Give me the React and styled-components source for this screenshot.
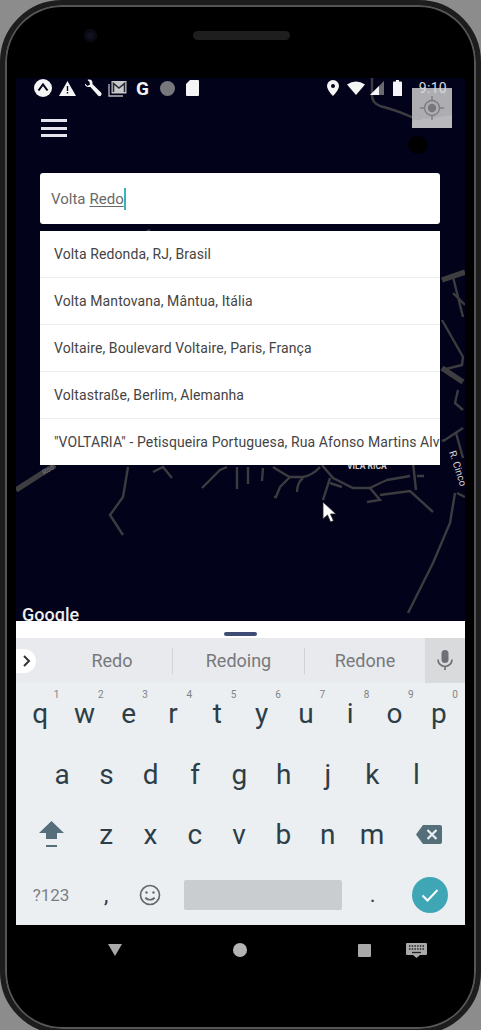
import React from 'react';
import styled, { createGlobalStyle } from 'styled-components';

const GlobalStyle = createGlobalStyle`
  html, body {
    margin: 0;
    padding: 0;
    width: 481px;
    height: 1030px;
    overflow: hidden;
    background: #8c8c8c;
    font-family: Roboto, "Noto Sans", sans-serif;
  }
`;

const Phone = styled.div`
  box-sizing: border-box;
  width: 481px;
  height: 1034px;
  border: 5px solid #1d1d1d;
  border-radius: 62px;
  background: #000;
  box-shadow: inset 0 0 0 2px #555;
  display: flex;
  flex-direction: column;
`;

const TopBezel = styled.div`
  height: 73px;
  flex: none;
  display: flex;
  align-items: flex-start;
  padding-top: 24px;
  box-sizing: border-box;
`;

const Camera = styled.div`
  width: 13px;
  height: 13px;
  margin-left: 79px;
  border-radius: 50%;
  background: #10121f;
  box-shadow: inset 0 0 0 3px #0a0a12;
`;

const Speaker = styled.div`
  width: 97px;
  height: 9px;
  margin-left: 96px;
  margin-top: 2px;
  border-radius: 5px;
  background: #1e1e1e;
`;

const Screen = styled.div`
  position: relative;
  flex: none;
  height: 847px;
  margin: 0 11px;
  background: #02021a;
  display: flex;
  flex-direction: column;
  overflow: hidden;
`;

const MapDrawing = styled.svg`
  position: absolute;
  left: 0;
  top: 0;
`;

const StatusBar = styled.div`
  position: relative;
  z-index: 2;
  height: 20px;
  flex: none;
  display: flex;
  align-items: center;
  justify-content: space-between;
  padding: 0 18px 0 14px;
`;

const StatusGroup = styled.div`
  display: flex;
  align-items: center;
`;

const StatusSlot = styled.div`
  width: ${props => props.$width || 25}px;
  height: 20px;
  display: flex;
  align-items: center;
  justify-content: center;
  color: #f2f2f2;
`;

const GoogleG = styled.span`
  font-size: 19px;
  font-weight: 700;
  line-height: 1;
`;

const Clock = styled.span`
  margin-left: 7px;
  font-size: 14px;
  letter-spacing: 0.3px;
  color: #d9d9dc;
`;

const LocateButton = styled.div`
  position: absolute;
  z-index: 1;
  top: 10px;
  right: 13px;
  width: 40px;
  height: 40px;
  background: linear-gradient(172deg, #aeaeb2 72%, #b9b9bd 72%);
  display: flex;
  align-items: center;
  justify-content: center;
`;

const MenuButton = styled.div`
  position: relative;
  flex: none;
  width: 26px;
  height: 18px;
  margin: 21px 0 0 25px;
  display: flex;
  flex-direction: column;
  justify-content: space-between;
`;

const MenuBar = styled.span`
  display: block;
  height: 3px;
  background: #e4e4ea;
`;

const SearchBox = styled.div`
  position: relative;
  flex: none;
  height: 51px;
  margin: 36px 25px 0 24px;
  padding-left: 11px;
  background: #fff;
  border-radius: 3px;
  display: flex;
  align-items: center;
  font-size: 15px;
  color: #696969;
`;

const Composing = styled.span`
  margin-left: 4px;
  text-decoration: underline;
  text-underline-offset: 2px;
  border-right: 2px solid #35b5bd;
  padding: 2px 0;
`;

const Suggestions = styled.ul`
  position: relative;
  flex: none;
  list-style: none;
  margin: 7px 25px 0 24px;
  padding: 0;
  background: #fff;
  height: 234px;
  overflow: hidden;
`;

const Suggestion = styled.li`
  box-sizing: border-box;
  height: 47px;
  padding-left: 14px;
  display: flex;
  align-items: center;
  white-space: nowrap;
  font-size: 14px;
  letter-spacing: 0.1px;
  color: #444;
  border-bottom: 1px solid ${props => (props.$last ? 'transparent' : '#eeeeee')};
`;

const Pointer = styled.svg`
  position: absolute;
  left: 306px;
  top: 423px;
`;

const Keyboard = styled.div`
  position: relative;
  margin-top: auto;
  flex: none;
  background: #eceff1;
  display: flex;
  flex-direction: column;
`;

const HandleStrip = styled.div`
  height: 17px;
  background: #fff;
  display: flex;
  justify-content: center;
  padding-top: 11px;
  box-sizing: border-box;
`;

const Handle = styled.div`
  width: 33px;
  height: 4px;
  border-radius: 2px;
  background: #3d4b75;
`;

const CandidateStrip = styled.div`
  height: 45px;
  background: #e8eaed;
  display: flex;
  align-items: center;
`;

const ExpandTab = styled.div`
  width: 20px;
  height: 24px;
  margin-right: 16px;
  border-radius: 0 12px 12px 0;
  background: #fff;
  display: flex;
  align-items: center;
  justify-content: center;
`;

const Candidate = styled.div`
  box-sizing: border-box;
  width: ${props => props.$width}px;
  height: 26px;
  line-height: 26px;
  text-align: center;
  font-size: 18px;
  color: #77797c;
  border-right: ${props => (props.$divider ? '1px solid #d0d2d5' : 'none')};
`;

const MicCell = styled.div`
  width: 40px;
  height: 45px;
  background: #d8dadc;
  display: flex;
  align-items: center;
  justify-content: center;
`;

const KeyRow = styled.div`
  height: 60.4px;
  display: flex;
  align-items: center;
  padding-left: ${props => props.$inset || 2}px;
`;

const Key = styled.div`
  position: relative;
  flex: none;
  width: ${props => props.$width || 44.3}px;
  height: 100%;
  display: flex;
  align-items: center;
  justify-content: center;
  font-size: ${props => props.$size || 28}px;
  color: ${props => props.$color || '#2c3e48'};
`;

const KeyHint = styled.span`
  position: absolute;
  top: 6px;
  right: 3px;
  font-size: 10px;
  color: #7d8488;
`;

const SpaceBar = styled.div`
  width: 158px;
  height: 30px;
  margin: 0 9px 0 11px;
  flex: none;
  border-radius: 2px;
  background: #cacdd0;
`;

const DoneButton = styled.div`
  width: 36px;
  height: 36px;
  border-radius: 50%;
  background: #3fa6b6;
  display: flex;
  align-items: center;
  justify-content: center;
`;

const NavBar = styled.div`
  flex: none;
  height: 50px;
  margin: 0 11px;
  padding-left: 92px;
  display: flex;
  align-items: center;
`;

const NavBack = styled.div`
  width: 0;
  height: 0;
  border-left: 7px solid transparent;
  border-right: 7px solid transparent;
  border-top: 12px solid #a9a9a9;
`;

const NavHome = styled.div`
  width: 14px;
  height: 14px;
  margin-left: 111px;
  border-radius: 50%;
  background: #b4b4b4;
`;

const NavRecents = styled.div`
  width: 13px;
  height: 13px;
  margin-left: 111px;
  border-radius: 1px;
  background: #a9a9a9;
`;

const NavKeyboard = styled.svg`
  margin-left: 35px;
`;

const rowOne = [
  ['q', 1], ['w', 2], ['e', 3], ['r', 4], ['t', 5],
  ['y', 6], ['u', 7], ['i', 8], ['o', 9], ['p', 0]
];
const rowTwo = ['a', 's', 'd', 'f', 'g', 'h', 'j', 'k', 'l'];
const rowThree = ['z', 'x', 'c', 'v', 'b', 'n', 'm'];

const places = [
  'Volta Redonda, RJ, Brasil',
  'Volta Mantovana, Mântua, Itália',
  'Voltaire, Boulevard Voltaire, Paris, França',
  'Voltastraße, Berlim, Alemanha',
  '"VOLTARIA" - Petisqueira Portuguesa, Rua Afonso Martins Alves'
];

// road centre lines, in page coordinates
const thinRoads = [
  'M372 77v18q0 8 8 11q16 4 34 12',
  'M128 467l-5 30l-13 18l13 20',
  'M153 472l10-5l9 11',
  'M202 488l18-18l7-3',
  'M237 467v22M248 467v17M263 468l-1 13',
  'M273 467q14 9 17 10h13q10-2 17-10',
  'M290 477l-10 10l-4 10h-2M303 478q-6 5-6 14',
  'M322 465l11 13l20 10h17q10-5 17-8l23-4',
  'M330 478l-7 22M330 483l12 4',
  'M370 488l10 12l-13 2M380 495l30-4l23 21M413 463l3 27M417 476h7',
  'M455 493l-5 30l-17 40l-25 50M457 493l8 4',
  'M453 277l10 40M453 293l12 12M442 320l21 37l-1 8l-20 5',
  'M458 390l-3 13l8 7M463 428l-18 12l-3 1M456 433l7 25',
  'M130 240l20-10'
];
const thickRoads = ['M16 490l39-25', 'M442 280l23-8', 'M442 368l21 14'];

const App = () => (
  <React.Fragment>
    <GlobalStyle />
    <Phone>
      <TopBezel>
        <Camera />
        <Speaker />
      </TopBezel>
      <Screen>
        <MapDrawing width="449" height="847" viewBox="16 78 449 847" fill="none">
          {thinRoads.map(d => (
            <path key={d} d={d} stroke="#3c3c40" strokeWidth="2.4" />
          ))}
          {thickRoads.map(d => (
            <path key={d} d={d} stroke="#3e3e40" strokeWidth="5.5" />
          ))}
          <ellipse cx="418" cy="145" rx="10" ry="9" fill="#000" />
          <text x="44" y="475" fontSize="7" fill="#77777a" transform="rotate(-30 44 475)" fontFamily="Roboto">
            Rod.
          </text>
          <text x="347" y="469" fontSize="8.5" fontWeight="700" fill="#c8c8cc" fontFamily="Roboto">
            VILA RICA
          </text>
          <text x="449" y="452" fontSize="10" fill="#d5d5d8" transform="rotate(72 449 452)" fontFamily="Roboto">
            R. Cinco
          </text>
          <text x="22" y="621" fontSize="18" fontWeight="500" fill="#eee" fontFamily="Roboto">
            Google
          </text>
        </MapDrawing>

        <LocateButton>
          <svg width="26" height="26" viewBox="0 0 26 26" fill="none" stroke="#7d7d82" strokeWidth="1.4">
            <circle cx="13" cy="13" r="7.5" />
            <circle cx="13" cy="13" r="4.2" fill="#77777c" stroke="none" />
            <path d="M13 1v4.5M13 20.5V25M1 13h4.5M20.5 13H25" />
          </svg>
        </LocateButton>

        <StatusBar>
          <StatusGroup>
            <StatusSlot>
              <svg width="18" height="18" viewBox="0 0 18 18">
                <circle cx="9" cy="9" r="9" fill="#f5f5f5" />
                <path d="M4.5 11.5L9 5.5l4.5 6" fill="none" stroke="#02021a" strokeWidth="2" />
              </svg>
            </StatusSlot>
            <StatusSlot>
              <svg width="17" height="15" viewBox="0 0 17 15">
                <path d="M8.5 0L17 15H0z" fill="#f5f5f5" />
                <path d="M7.8 5h1.4v5H7.8zM7.8 11h1.4v1.6H7.8z" fill="#02021a" />
              </svg>
            </StatusSlot>
            <StatusSlot>
              <svg width="18" height="18" viewBox="0 0 18 18">
                <path
                  d="M1 4.5L3.5 7 6 5.5 5.5 3 3.5 1C5.5 0 8 .8 8.4 3c.2.8.1 1.500 0 2L17 13.500c.8 1 .8 2 0 3s-2.300 1-3 0L6.200 7.800C3.500 8.500.5 7 1 4.500z"
                  fill="#f5f5f5"
                />
              </svg>
            </StatusSlot>
            <StatusSlot>
              <svg width="19" height="17" viewBox="0 0 19 17" fill="none">
                <path d="M1 4v12h14" stroke="#b9b9bd" strokeWidth="1.3" />
                <rect x="3.500" y="1" width="15" height="12.500" fill="#c9c9cc" />
                <path d="M5.500 12V3.500L11 8l5.500-4.500V12" stroke="#2a2a35" strokeWidth="1.600" />
              </svg>
            </StatusSlot>
            <StatusSlot>
              <GoogleG>G</GoogleG>
            </StatusSlot>
            <StatusSlot>
              <svg width="15" height="15" viewBox="0 0 15 15">
                <circle cx="7.500" cy="7.500" r="7.500" fill="#77777c" />
              </svg>
            </StatusSlot>
            <StatusSlot>
              <svg width="13" height="16" viewBox="0 0 13 16">
                <path d="M4 0h8a1 1 0 0 1 1 1v14a1 1 0 0 1-1 1H1a1 1 0 0 1-1-1V4z" fill="#f5f5f5" />
              </svg>
            </StatusSlot>
          </StatusGroup>
          <StatusGroup>
            <StatusSlot $width={18}>
              <svg width="12" height="16" viewBox="0 0 12 16">
                <path
                  fillRule="evenodd"
                  d="M6 0a6 6 0 0 1 6 6c0 4-6 10-6 10S0 10 0 6a6 6 0 0 1 6-6zm0 4a2 2 0 1 0 0 4 2 2 0 0 0 0-4z"
                  fill="#f5f5f5"
                />
              </svg>
            </StatusSlot>
            <StatusSlot $width={28}>
              <svg width="18" height="14" viewBox="0 0 18 14">
                <path d="M0 3.500Q9-2.500 18 3.500L9 14z" fill="#f5f5f5" />
              </svg>
            </StatusSlot>
            <StatusSlot $width={14}>
              <svg width="14" height="14" viewBox="0 0 14 14">
                <path d="M14 0v14H0z" fill="#6a6a6e" />
                <path d="M9 5v9H0z" fill="#f5f5f5" />
              </svg>
            </StatusSlot>
            <StatusSlot $width={28}>
              <svg width="9" height="16" viewBox="0 0 9 16">
                <path d="M3 0h3v1.500h2a1 1 0 0 1 1 1V16H0V2.500a1 1 0 0 1 1-1h2z" fill="#f5f5f5" />
              </svg>
            </StatusSlot>
            <Clock>9:10</Clock>
          </StatusGroup>
        </StatusBar>

        <MenuButton>
          <MenuBar />
          <MenuBar />
          <MenuBar />
        </MenuButton>

        <SearchBox>
          Volta<Composing>Redo</Composing>
        </SearchBox>

        <Suggestions>
          {places.map((place, i) => (
            <Suggestion key={place} $last={i === places.length - 1}>
              {place}
            </Suggestion>
          ))}
        </Suggestions>

        <Pointer width="16" height="24" viewBox="0 0 16 24">
          <path d="M1 1v17l4.500-4 3 7 3-1.300-3-6.700H14z" fill="#fff" stroke="#222" strokeWidth="0.800" />
        </Pointer>

        <Keyboard>
          <HandleStrip>
            <Handle />
          </HandleStrip>
          <CandidateStrip>
            <ExpandTab>
              <svg width="9" height="12" viewBox="0 0 9 12" fill="none" stroke="#333" strokeWidth="2">
                <path d="M2 1l5 5-5 5" />
              </svg>
            </ExpandTab>
            <Candidate $width={121} $divider>Redo</Candidate>
            <Candidate $width={132} $divider>Redoing</Candidate>
            <Candidate $width={120}>Redone</Candidate>
            <MicCell>
              <svg width="16" height="21" viewBox="0 0 16 21" fill="none">
                <rect x="4.500" y="0" width="7" height="13" rx="3.500" fill="#6d7175" />
                <path d="M1 9.500a7 7 0 0 0 14 0M8 16.500V20" stroke="#6d7175" strokeWidth="1.700" />
              </svg>
            </MicCell>
          </CandidateStrip>

          <KeyRow>
            {rowOne.map(([letter, hint]) => (
              <Key key={letter}>
                {letter}
                <KeyHint>{hint}</KeyHint>
              </Key>
            ))}
          </KeyRow>
          <KeyRow $inset={24}>
            {rowTwo.map(letter => (
              <Key key={letter}>{letter}</Key>
            ))}
          </KeyRow>
          <KeyRow>
            <Key $width={66}>
              <svg width="25" height="28" viewBox="0 0 25 28">
                <path d="M12.500 1L25 13h-7v6H7v-6H0z" fill="#546e7a" />
                <rect x="7" y="25" width="11" height="2" fill="#546e7a" />
              </svg>
            </Key>
            {rowThree.map(letter => (
              <Key key={letter}>{letter}</Key>
            ))}
            <Key $width={70}>
              <svg width="26" height="19" viewBox="0 0 26 19">
                <path d="M7 0h17a2 2 0 0 1 2 2v15a2 2 0 0 1-2 2H7L0 9.500z" fill="#546e7a" />
                <path d="M11.500 5l9 9M20.500 5l-9 9" stroke="#eceff1" strokeWidth="2.200" />
              </svg>
            </Key>
          </KeyRow>
          <KeyRow>
            <Key $width={66} $size={17} $color="#7b7f83">?123</Key>
            <Key $size={22}>,</Key>
            <Key>
              <svg width="22" height="22" viewBox="0 0 22 22" fill="none" stroke="#666a6e" strokeWidth="1.700">
                <circle cx="11" cy="11" r="9.500" />
                <circle cx="7.500" cy="8.500" r="1.200" fill="#666a6e" stroke="none" />
                <circle cx="14.500" cy="8.500" r="1.200" fill="#666a6e" stroke="none" />
                <path d="M6.500 13.500c1.500 3 7.500 3 9 0" />
              </svg>
            </Key>
            <SpaceBar />
            <Key $size={22}>.</Key>
            <Key $width={70}>
              <DoneButton>
                <svg width="18" height="14" viewBox="0 0 18 14" fill="none" stroke="#fff" strokeWidth="2">
                  <path d="M1.500 7.500l5 5L16.500 2" />
                </svg>
              </DoneButton>
            </Key>
          </KeyRow>
        </Keyboard>
      </Screen>
      <NavBar>
        <NavBack />
        <NavHome />
        <NavRecents />
        <NavKeyboard width="21" height="15" viewBox="0 0 21 15">
          <path d="M1 0h19a1 1 0 0 1 1 1v10a1 1 0 0 1-1 1h-6l-3.500 3-3.500-3H1a1 1 0 0 1-1-1V1a1 1 0 0 1 1-1z" fill="#a9a9a9" />
          <path d="M3 3h15M3 6h15" stroke="#222" strokeWidth="1.300" strokeDasharray="1.500 1.200" />
          <path d="M6 9.500h9" stroke="#222" strokeWidth="1.300" />
        </NavKeyboard>
      </NavBar>
    </Phone>
  </React.Fragment>
);

export default App;
